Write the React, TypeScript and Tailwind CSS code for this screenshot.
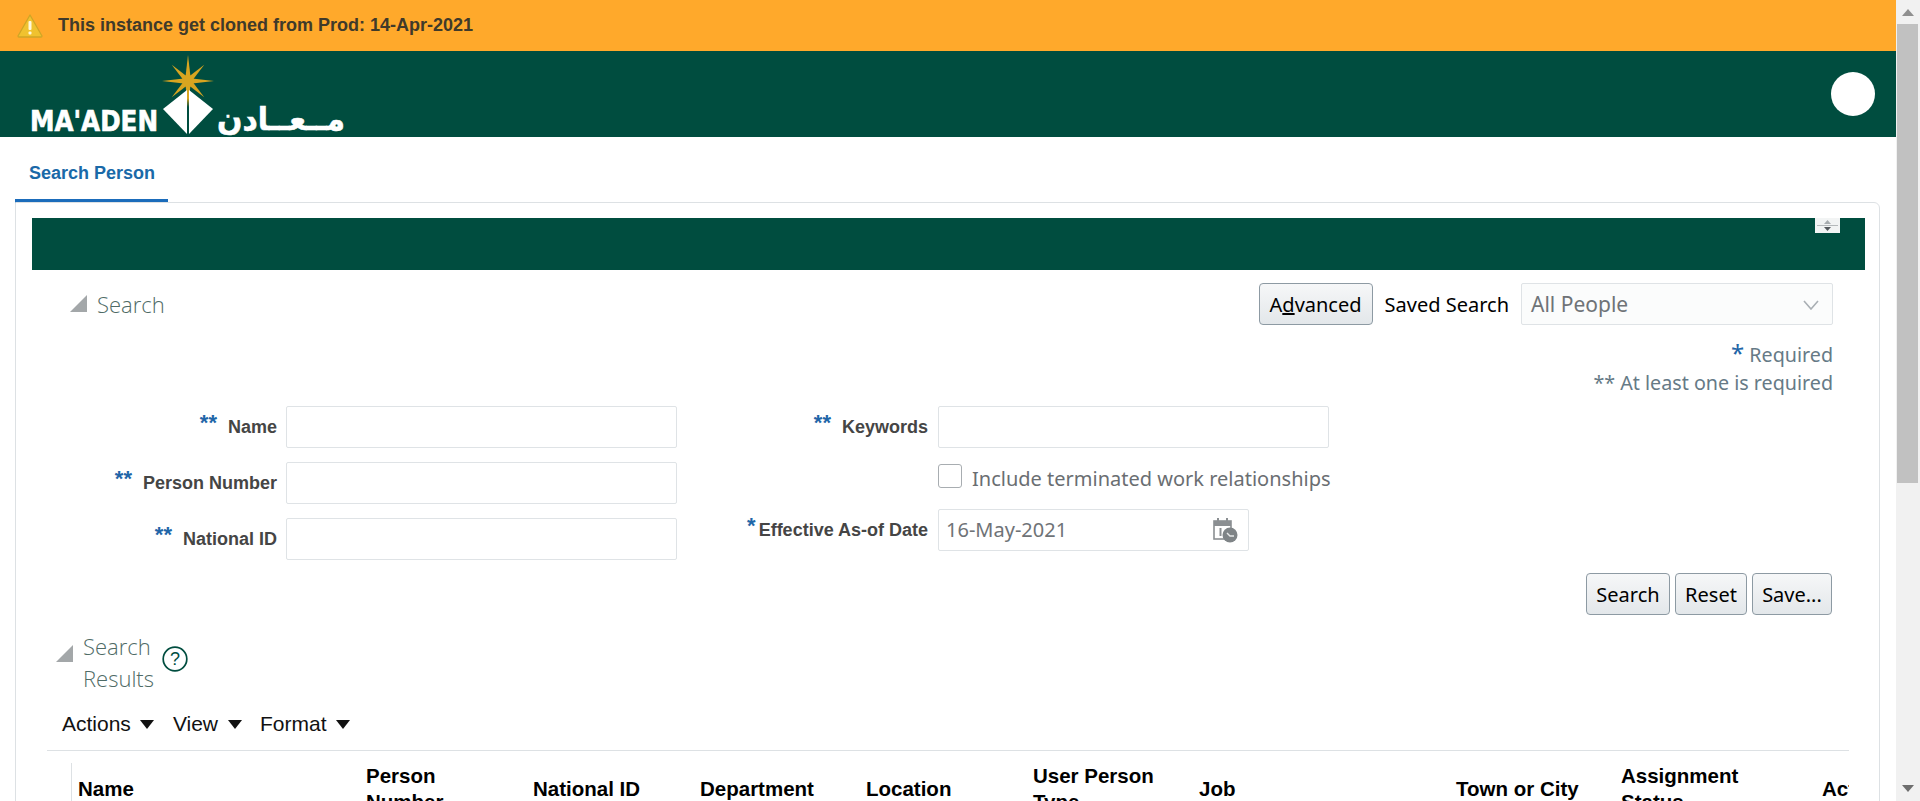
import React from "react";

const ui = "font-['Noto_Sans',sans-serif]";
const ar = "font-['Liberation_Sans',Arial,sans-serif]";
const thin = "font-['Open_Sans',sans-serif]";

function Logo() {
  const axis = [0, 90, 180, 270];
  const diag = [45, 135, 225, 315];
  const spike = (deg: number, r: number) => {
    const a = (deg * Math.PI) / 180;
    const w = 5;
    const cx = 188;
    const cy = 30;
    const p = (rad: number, an: number) => `${cx + rad * Math.sin(an)},${cy - rad * Math.cos(an)}`;
    return `${p(r, a)} ${p(w, a + Math.PI / 6)} ${p(w, a - Math.PI / 6)}`;
  };
  return (
    <svg width="360" height="86" viewBox="0 0 360 86" className="block">
      {axis.map((d) => (
        <polygon key={d} points={spike(d, 26)} fill="#d8a520" />
      ))}
      {diag.map((d) => (
        <polygon key={d} points={spike(d, 23)} fill="#d8a520" />
      ))}
      <circle cx="188" cy="30" r="6" fill="#d8a520" />
      <polygon points="187,39 163,58 187,83" fill="#ffffff" />
      <polygon points="189,39 213,58 189,83" fill="#ffffff" />
      <text
        x="30"
        y="80"
        textLength="128"
        lengthAdjust="spacingAndGlyphs"
        fontFamily="'DejaVu Sans', sans-serif"
        fontWeight="700"
        fontSize="29"
        stroke="#ffffff"
        strokeWidth="0.7"
        fill="#ffffff"
      >
        MA'ADEN
      </text>
      <text
        x="217"
        y="79"
        textLength="128"
        lengthAdjust="spacingAndGlyphs"
        fontFamily="'DejaVu Sans', sans-serif"
        fontWeight="700"
        fontSize="32"
        stroke="#ffffff"
        strokeWidth="0.6"
        fill="#ffffff"
      >
        مــعــادن
      </text>
    </svg>
  );
}

function Warning() {
  return (
    <svg width="26" height="24" viewBox="0 0 26 24" className="block shrink-0">
      <path d="M13 1 L25 22 Q25 23 24 23 L2 23 Q1 23 1 22 Z" fill="#f0c22f" stroke="#cfa526" strokeWidth="1.3" strokeLinejoin="round" />
      <rect x="11.5" y="7" width="3" height="9" rx="1" fill="#fff8dc" />
      <rect x="11.5" y="17.5" width="3" height="3" rx="1" fill="#fff8dc" />
    </svg>
  );
}

function Corner({ className }: { className: string }) {
  return (
    <svg width="17" height="17" viewBox="0 0 17 17" className={className}>
      <polygon points="17,0 17,17 0,17" fill="#a3a7a9" />
    </svg>
  );
}

function Caret({ className }: { className: string }) {
  return (
    <svg width="14" height="9" viewBox="0 0 14 9" className={className}>
      <polygon points="0,0 14,0 7,9" fill="#111111" />
    </svg>
  );
}

function Btn({ w, children }: { w: string; children: React.ReactNode }) {
  return (
    <button
      className={`${w} h-[42px] shrink-0 rounded-[4px] border border-[#8d9aa3] bg-gradient-to-b from-[#f6f7f8] to-[#e3e7ea] pt-[2px] text-center text-[20px] text-black ${ui}`}
    >
      {children}
    </button>
  );
}

function Label({ w, stars, gap, text }: { w: string; stars: string; gap: string; text: string }) {
  return (
    <div className={`${w} flex shrink-0 items-center justify-end ${ar}`}>
      <span className={`${gap} relative top-[-4px] text-[22px] leading-none font-bold text-[#1f66a8]`}>{stars}</span>
      <span className="text-[18px] font-bold text-[#454545]">{text}</span>
    </div>
  );
}

const heads = [
  "Name",
  "Person Number",
  "National ID",
  "Department",
  "Location",
  "User Person Type",
  "Job",
  "Town or City",
  "Assignment Status",
  "Actions",
];

export default function App() {
  return (
    <div className="flex h-[801px] w-[1920px] overflow-hidden bg-white">
      <div className="h-full w-[1896px] shrink-0">
        <div className={`flex h-[51px] items-center gap-[15px] bg-[#ffa92b] pl-[17px] ${ar}`}>
          <Warning />
          <span className="text-[18px] font-bold text-[#403a2a]">
            This instance get cloned from Prod: 14-Apr-2021
          </span>
        </div>

        <div className="flex h-[86px] items-center justify-between bg-[#004d3f] pr-[21px]">
          <Logo />
          <div className="h-[44px] w-[44px] rounded-full bg-white" />
        </div>

        <div className="h-[66px] pl-[15px]">
          <div className={`flex h-full w-[153px] items-center border-b-4 border-[#1b6cbb] pt-[10px] pl-[14px] ${ar}`}>
            <span className="text-[18px] font-bold text-[#1a69a8]">Search Person</span>
          </div>
        </div>

        <div className="mt-[-1px] ml-[15px] h-[700px] w-[1865px] rounded-tr-[6px] border border-[#dde1e4] pt-[15px] pr-[14px] pl-[16px]">
          <div className="relative h-[52px] bg-[#004d3f]">
            <div className="absolute top-0 right-[25px] flex h-[15px] w-[25px] flex-col items-center justify-center bg-[#f2f4f4]">
              <svg width="25" height="15" viewBox="0 0 25 15" className="block">
                <polygon points="12.5,2 16,6 9,6" fill="#a8adb0" />
                <rect x="2" y="7" width="21" height="1" fill="#b5b9bb" />
                <polygon points="9,9 16,9 12.5,13" fill="#555a5e" />
              </svg>
            </div>
          </div>

          <div className="mt-[13px] flex h-[42px] items-center pr-[32px]">
            <Corner className="relative top-[-1px] ml-[38px] block shrink-0" />
            <span className={`ml-[10px] text-[22px] font-light text-[#4f6b66] ${thin}`}>Search</span>
            <div className="ml-auto flex items-center">
              <Btn w="w-[114px]">
                A<span className="underline">d</span>vanced
              </Btn>
              <span className={`mt-[2px] ml-[12px] text-[20px] text-black ${ui}`}>Saved Search</span>
              <div className="ml-[12px] flex h-[42px] w-[312px] items-center justify-between rounded-[2px] border border-[#dfe3e6] bg-[#fbfcfc] pt-[1px] pr-[13px] pl-[9px]">
                <span className={`text-[21px] text-[#6f7377] ${ui}`}>All People</span>
                <svg width="16" height="10" viewBox="0 0 16 10" className="block">
                  <polyline points="1,1 8,9 15,1" fill="none" stroke="#a9afb4" strokeWidth="1.6" />
                </svg>
              </div>
            </div>
          </div>

          <div className={`mt-[16px] pr-[32px] text-right text-[19.7px] leading-[28px] text-[#667a86] ${ui}`}>
            <div>
              <span className="text-[24px] leading-none text-[#1f66a8]">*</span> Required
            </div>
            <div>
              <span>**</span> At least one is required
            </div>
          </div>

          <div className="mt-[9px] flex h-[154px]">
            <div className="flex w-[646px] shrink-0 flex-col gap-[14px]">
              {["Name", "Person Number", "National ID"].map((t) => (
                <div key={t} className="flex h-[42px] gap-[9px]">
                  <Label w="w-[245px]" stars="**" gap="mr-[11px]" text={t} />
                  <div className="h-[42px] w-[391px] rounded-[2px] border border-[#dfe3e6] bg-white" />
                </div>
              ))}
            </div>
            <div className="flex flex-col">
              <div className="flex h-[42px] gap-[10px]">
                <Label w="w-[250px]" stars="**" gap="mr-[11px]" text="Keywords" />
                <div className="h-[42px] w-[391px] rounded-[2px] border border-[#dfe3e6] bg-white" />
              </div>
              <div className="mt-[16px] flex h-[35px] items-start gap-[10px] pl-[260px]">
                <div className="h-[24px] w-[24px] shrink-0 rounded-[3px] border border-[#a8adb1] bg-white" />
                <span className={`mt-[1px] text-[20px] leading-[28px] whitespace-nowrap text-[#6a6e72] ${ui}`}>
                  Include terminated work relationships
                </span>
              </div>
              <div className="mt-[10px] flex h-[42px] gap-[10px]">
                <Label w="w-[250px]" stars="*" gap="mr-[3px]" text="Effective As-of Date" />
                <div className="flex h-[42px] w-[311px] items-center justify-between rounded-[2px] border border-[#dfe3e6] bg-white pr-[9px] pl-[7px]">
                  <span className={`text-[20px] text-[#6f7377] ${ui}`}>16-May-2021</span>
                  <svg width="27" height="26" viewBox="0 0 27 26" className="block">
                    <rect x="2" y="4" width="17" height="18" fill="none" stroke="#8b8f92" strokeWidth="1.6" />
                    <rect x="2" y="4" width="17" height="5" fill="#8b8f92" />
                    <rect x="5" y="1" width="2" height="4" fill="#8b8f92" />
                    <rect x="14" y="1" width="2" height="4" fill="#8b8f92" />
                    <rect x="7.5" y="11" width="2" height="8" fill="#8b8f92" />
                    <circle cx="18" cy="18" r="7.5" fill="#7f8487" />
                    <polyline points="15,16 18,19 22,19" fill="none" stroke="#e8e9ea" strokeWidth="1.4" />
                  </svg>
                </div>
              </div>
            </div>
          </div>

          <div className="mt-[13px] flex h-[42px] justify-end gap-[5px] pr-[33px]">
            <Btn w="w-[84px]">Search</Btn>
            <Btn w="w-[72px]">Reset</Btn>
            <Btn w="w-[80px]">Save...</Btn>
          </div>

          <div className="mt-[15px] flex h-[74px] items-start pl-[24px]">
            <Corner className="mt-[15px] block shrink-0" />
            <div className={`ml-[10px] w-[70px] text-[22px] leading-[32px] font-light text-[#4f6b66] ${thin}`}>
              Search Results
            </div>
            <svg width="26" height="26" viewBox="0 0 26 26" className="mt-[16px] ml-[9px] block shrink-0">
              <circle cx="13" cy="13" r="11.8" fill="none" stroke="#004d3f" strokeWidth="1.7" />
              <text x="13" y="19" textAnchor="middle" fontFamily="'Liberation Sans', sans-serif" fontSize="18" fill="#004d3f">
                ?
              </text>
            </svg>
          </div>

          <div className={`mt-[5px] flex h-[30px] items-center pl-[30px] text-[21px] text-[#111111] ${ar}`}>
            <span>Actions</span>
            <Caret className="ml-[9px] block shrink-0" />
            <span className="ml-[19px]">View</span>
            <Caret className="ml-[10px] block shrink-0" />
            <span className="ml-[18px]">Format</span>
            <Caret className="ml-[9px] block shrink-0" />
          </div>

          <div className="mt-[11px] mr-[16px] ml-[15px] overflow-hidden border-t border-[#dde1e4] pt-[12px]">
            <div className={`ml-[24px] grid h-[44px] w-[1800px] grid-cols-[288px_167px_167px_166px_167px_166px_257px_165px_201px_100px] items-center border-l border-[#dde1e4] pl-[6px] text-[20.5px] leading-[26px] font-bold text-black ${ar}`}>
              {heads.map((h, i) => (
                <div key={h} className={i === 1 || i === 5 || i === 8 ? "w-[140px]" : "whitespace-nowrap"}>
                  {h}
                </div>
              ))}
            </div>
          </div>
        </div>
      </div>

      <div className="relative h-full w-[24px] shrink-0 bg-[#f1f1f1]">
        <svg width="24" height="24" viewBox="0 0 24 24" className="block">
          <polygon points="12,9 18,16 6,16" fill="#8f8f8f" />
        </svg>
        <div className="ml-[1px] h-[459px] w-[21px] bg-[#c1c1c1]" />
        <svg width="24" height="24" viewBox="0 0 24 24" className="absolute bottom-0 left-0 block">
          <polygon points="6,8 18,8 12,15" fill="#6e6e6e" />
        </svg>
      </div>
    </div>
  );
}
